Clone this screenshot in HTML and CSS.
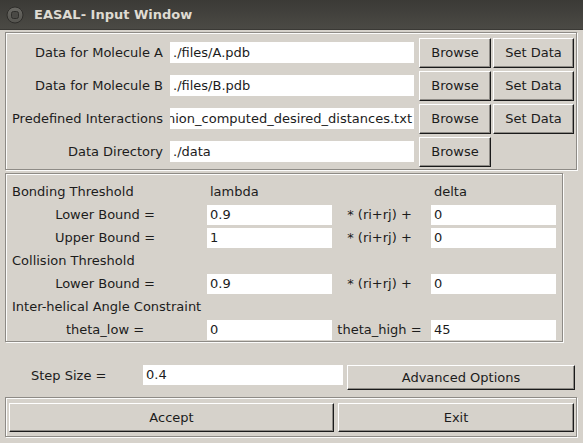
FILE: index.html
```html
<!DOCTYPE html>
<html>
<head>
<meta charset="utf-8">
<link rel="stylesheet" href="styles.css">
</head>
<body>
<div class="titlebar">
  <svg class="close" width="18" height="18" viewBox="0 0 18 18">
    <defs>
      <linearGradient id="cg" x1="0" y1="0" x2="0" y2="1">
        <stop offset="0" stop-color="#6a6964"/>
        <stop offset="1" stop-color="#54534e"/>
      </linearGradient>
    </defs>
    <circle cx="9" cy="9" r="8" fill="url(#cg)" stroke="#2e2d2a" stroke-width="1"/>
    <rect x="5.5" y="5.5" width="7" height="7" rx="2" fill="#4a4945" stroke="#2f2e2b" stroke-width="1"/>
  </svg>
  <span class="title">EASAL- Input Window</span>
</div>
<div class="main">
  <div class="frame data">
    <div class="drow">
      <span class="dlabel">Data for Molecule A</span>
      <div class="entry wide">./files/A.pdb</div>
      <button class="btn browse">Browse</button>
      <button class="btn set">Set Data</button>
    </div>
    <div class="drow">
      <span class="dlabel">Data for Molecule B</span>
      <div class="entry wide">./files/B.pdb</div>
      <button class="btn browse">Browse</button>
      <button class="btn set">Set Data</button>
    </div>
    <div class="drow">
      <span class="dlabel">Predefined Interactions</span>
      <div class="entry wide scrolled"><span>union_computed_desired_distances.txt</span></div>
      <button class="btn browse">Browse</button>
      <button class="btn set">Set Data</button>
    </div>
    <div class="drow">
      <span class="dlabel">Data Directory</span>
      <div class="entry wide">./data</div>
      <button class="btn browse">Browse</button>
    </div>
  </div>

  <div class="frame params">
    <span class="head">Bonding Threshold</span>
    <span class="colhead">lambda</span>
    <span></span>
    <span class="colhead">delta</span>

    <span class="plabel">Lower Bound =</span>
    <div class="entry small">0.9</div>
    <span class="mid">* (ri+rj) +</span>
    <div class="entry small">0</div>

    <span class="plabel">Upper Bound =</span>
    <div class="entry small">1</div>
    <span class="mid">* (ri+rj) +</span>
    <div class="entry small">0</div>

    <span class="head span4">Collision Threshold</span>

    <span class="plabel">Lower Bound =</span>
    <div class="entry small">0.9</div>
    <span class="mid">* (ri+rj) +</span>
    <div class="entry small">0</div>

    <span class="head span4">Inter-helical Angle Constraint</span>

    <span class="plabel">theta_low =</span>
    <div class="entry small">0</div>
    <span class="mid">theta_high =</span>
    <div class="entry small">45</div>
  </div>

  <div class="steprow">
    <span class="steplabel">Step Size =</span>
    <div class="entry step">0.4</div>
    <button class="btn adv">Advanced Options</button>
  </div>

  <div class="frame bottom">
    <button class="btn big accept">Accept</button>
    <button class="btn big exit">Exit</button>
  </div>
</div>
</body>
</html>
```
FILE: styles.css
```css
* { box-sizing: border-box; }
html, body {
  margin: 0;
  padding: 0;
  width: 583px;
  height: 443px;
  overflow: hidden;
  background: #d6d2cb;
  font-family: "DejaVu Sans", sans-serif;
  font-size: 13px;
  color: #1c1c1c;
}
.titlebar {
  height: 30px;
  background: linear-gradient(#3b3a36, #4b4a45);
  display: flex;
  align-items: center;
  padding-left: 6px;
  border-bottom: 1px solid #3a3935;
}
.title {
  margin-left: 10px;
  color: #dfdbd2;
  font-weight: bold;
  font-size: 13px;
}
.main {
  padding: 2px 5px 0 5px;
}
.frame {
  border: 1px solid #8e8b86;
  box-shadow: inset 1px 1px 0 #fcfcfb, 1px 1px 0 #fcfcfb;
}
.data {
  width: 572px;
  height: 138px;
  padding: 3px 0 0 1px;
}
.drow {
  display: flex;
  align-items: center;
  height: 33px;
}
.dlabel {
  width: 158px;
  text-align: right;
  white-space: nowrap;
  padding-right: 2px;
}
.entry {
  background: #ffffff;
  height: 21px;
  line-height: 21px;
  padding-left: 3px;
  white-space: nowrap;
  overflow: hidden;
}
.wide {
  width: 244px;
  margin-left: 5px;
}
.scrolled {
  display: flex;
  justify-content: flex-end;
  padding-right: 2px;
  padding-left: 0;
}
.scrolled span { flex: none; }
.btn {
  font-family: "DejaVu Sans", sans-serif;
  font-size: 13px;
  color: #1c1c1c;
  background: #d6d2cb;
  border: 1px solid;
  border-color: #ffffff #1a1a1a #1a1a1a #ffffff;
  box-shadow: inset -1px -1px 0 #8e8b86;
  padding: 0;
  height: 30px;
  margin: 0;
}
.browse { width: 72px; margin-left: 5px; }
.set { width: 81px; margin-left: 2px; }

.params {
  margin-top: 3px;
  width: 558px;
  height: 169px;
  padding: 6px 0 0 1px;
  display: grid;
  grid-template-columns: 200px 125px 99px 125px;
  grid-auto-rows: 23px;
  align-items: center;
}
.head { padding-left: 5px; white-space: nowrap; }
.span4 { grid-column: 1 / span 4; }
.colhead { padding-left: 3px; }
.plabel { text-align: center; white-space: nowrap; padding-right: 4px; }
.mid { text-align: center; white-space: nowrap; padding-right: 4px; }
.small { height: 20px; line-height: 20px; }

.steprow {
  display: flex;
  align-items: center;
  margin-top: 20px;
  height: 26px;
}
.steplabel {
  width: 138px;
  padding-left: 26px;
}
.step {
  width: 200px;
  height: 20px;
  line-height: 20px;
}
.adv {
  width: 228px;
  height: 25px;
  margin-left: 4px;
  margin-top: 4px;
}
.bottom {
  margin-top: 9px;
  width: 572px;
  height: 40px;
  display: flex;
  align-items: center;
  padding-left: 3px;
}
.big { height: 29px; }
.accept { width: 325px; }
.exit { width: 236px; margin-left: 4px; }
```
